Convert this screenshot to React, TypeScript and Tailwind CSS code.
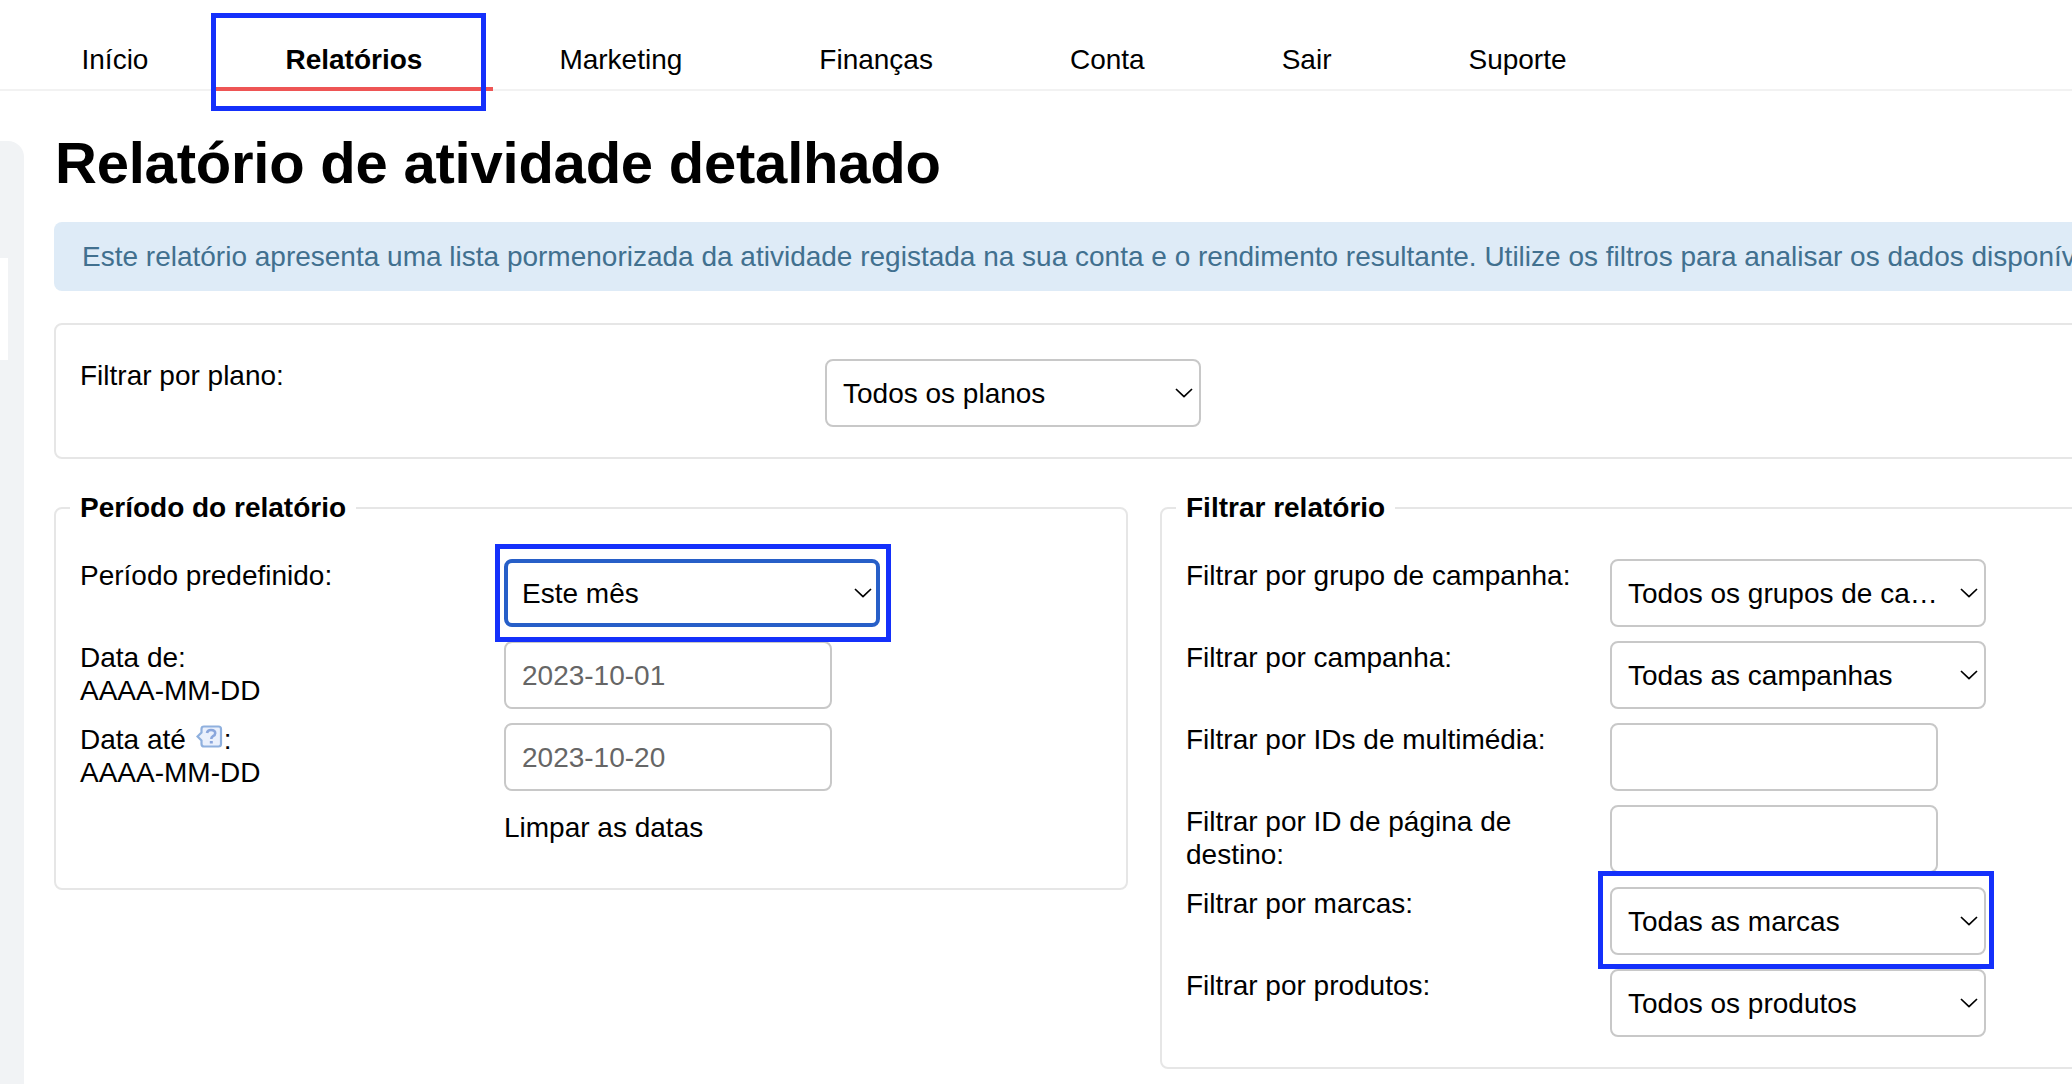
import type { ReactNode } from "react";

const NAV_ITEMS = ["Início", "Relatórios", "Marketing", "Finanças", "Conta", "Sair", "Suporte"];

function Highlight({ className }: { className: string }) {
  return <span className={`pointer-events-none absolute z-10 border-[5px] border-[#1430fb] ${className}`} />;
}

function Chevron() {
  return (
    <svg className="mr-[-2px] shrink-0" width="18" height="10" viewBox="0 0 18 10" fill="none">
      <path d="M1 1 L9 8.6 L17 1" stroke="#000" strokeWidth="1.7" strokeLinejoin="round" />
    </svg>
  );
}

function SelectBox({ value, focused, highlighted }: { value: string; focused?: boolean; highlighted?: boolean }) {
  return (
    <div className="relative h-[68px] w-[376px]">
      <button
        type="button"
        className={`flex h-full w-full items-center justify-between rounded-lg bg-white text-left ${
          focused ? "border-4 border-[#275fc8] pr-[6px] pl-[14px]" : "border-2 border-[#c8c8c8] pr-[8px] pl-4"
        }`}
      >
        <span className="whitespace-nowrap">{value}</span>
        <Chevron />
      </button>
      {highlighted && (
        <Highlight
          className={focused ? "-top-[15px] -left-[9px] h-[98px] w-[396px]" : "-top-[16px] -left-[12px] h-[98px] w-[396px]"}
        />
      )}
    </div>
  );
}

function InputBox({ value }: { value?: string }) {
  return (
    <input
      readOnly
      value={value ?? ""}
      className="block h-[68px] w-[328px] rounded-lg border-2 border-[#c8c8c8] bg-white px-4 pt-[2px] text-[#666]"
    />
  );
}

function Row({ label, children }: { label: ReactNode; children: ReactNode }) {
  return (
    <div className="flex h-[68px]">
      <div className="w-[424px] shrink-0 pr-[30px]">{label}</div>
      {children}
    </div>
  );
}

function HelpIcon() {
  return (
    <svg className="mr-[1px] ml-[2px] inline-block align-[1px]" width="27" height="23" viewBox="0 0 27 23" fill="none">
      <path
        d="M8 1.5 H22.5 Q25 1.5 25 4 V19 Q25 21.5 22.5 21.5 H8 Q5.5 21.5 5.5 19 V15.5 L1.5 11.5 L5.5 7.5 V4 Q5.5 1.5 8 1.5 Z"
        fill="#eaf0fc"
        stroke="#8fb0de"
        strokeWidth="2.2"
      />
      <path d="M11 8 Q11.5 5 15 5 Q19.2 5 19.2 8.2 Q19.2 10 17 11.2 Q15.3 12.2 15.3 14" stroke="#8aa6dc" strokeWidth="2.6" />
      <path d="M13.8 16 H16.8 V18.5 H13.8 Z" fill="#8aa6dc" />
    </svg>
  );
}

export default function App() {
  return (
    <div className="flex h-[1084px] w-full flex-col overflow-hidden bg-white font-['Liberation_Sans',Arial,sans-serif] text-[28px] leading-[33px] text-black">
      <nav className="flex h-[91px] shrink-0 border-b-2 border-[#f2f2f2] pl-[13px]">
        {NAV_ITEMS.map((item) => (
          <a key={item} className="relative h-[91px] px-[68.5px] pt-[43px] whitespace-nowrap">
            {item === "Relatórios" ? (
              <>
                <b>{item}</b>
                <span className="absolute bottom-0 -left-[2px] h-1 w-[278px] bg-[#ee5555]" />
                <Highlight className="top-[13px] -left-[6px] h-[98px] w-[275px]" />
              </>
            ) : (
              item
            )}
          </a>
        ))}
      </nav>
      <div className="flex min-h-0 flex-1">
        <aside className="mt-[50px] w-6 shrink-0 rounded-tr-2xl bg-[#f1f3f5] pt-[117px]">
          <div className="h-[102px] w-2 bg-white" />
        </aside>
        <main className="ml-[30px] w-[2180px] shrink-0">
          <h1 className="mt-[38px] pl-px text-[58px] leading-[68px] font-bold tracking-[-0.22px] whitespace-nowrap">
            Relatório de atividade detalhado
          </h1>
          <div className="mt-[25px] flex h-[69px] items-center rounded-lg bg-[#deebf7] pl-7 whitespace-nowrap text-[#41708f]">
            Este relatório apresenta uma lista pormenorizada da atividade registada na sua conta e o rendimento
            resultante. Utilize os filtros para analisar os dados disponíveis.
          </div>
          <section className="mt-8 flex h-[136px] rounded-lg border-2 border-[#e6e6e6] pt-[34px] pl-6">
            <div className="w-[745px]">Filtrar por plano:</div>
            <SelectBox value="Todos os planos" />
          </section>
          <div className="mt-8 flex items-start gap-8">
            <fieldset className="h-[399px] w-[1074px] shrink-0 rounded-lg border-2 border-[#e6e6e6]">
              <legend className="ml-[14px] px-[10px] leading-[34px] font-bold">Período do relatório</legend>
              <div className="flex flex-col gap-[14px] pt-[34px] pl-6">
                <Row label="Período predefinido:">
                  <SelectBox value="Este mês" focused highlighted />
                </Row>
                <Row
                  label={
                    <>
                      Data de:
                      <br />
                      AAAA-MM-DD
                    </>
                  }
                >
                  <InputBox value="2023-10-01" />
                </Row>
                <Row
                  label={
                    <>
                      Data até <HelpIcon />:
                      <br />
                      AAAA-MM-DD
                    </>
                  }
                >
                  <InputBox value="2023-10-20" />
                </Row>
                <a className="mt-[6px] ml-[424px]">Limpar as datas</a>
              </div>
            </fieldset>
            <fieldset className="h-[578px] w-[1074px] shrink-0 rounded-lg border-2 border-[#e6e6e6]">
              <legend className="ml-[14px] px-[10px] leading-[34px] font-bold">Filtrar relatório</legend>
              <div className="flex flex-col gap-[14px] pt-[34px] pl-6">
                <Row label="Filtrar por grupo de campanha:">
                  <SelectBox value="Todos os grupos de ca…" />
                </Row>
                <Row label="Filtrar por campanha:">
                  <SelectBox value="Todas as campanhas" />
                </Row>
                <Row label="Filtrar por IDs de multimédia:">
                  <InputBox />
                </Row>
                <Row label="Filtrar por ID de página de destino:">
                  <InputBox />
                </Row>
                <Row label="Filtrar por marcas:">
                  <SelectBox value="Todas as marcas" highlighted />
                </Row>
                <Row label="Filtrar por produtos:">
                  <SelectBox value="Todos os produtos" />
                </Row>
              </div>
            </fieldset>
          </div>
        </main>
      </div>
    </div>
  );
}
